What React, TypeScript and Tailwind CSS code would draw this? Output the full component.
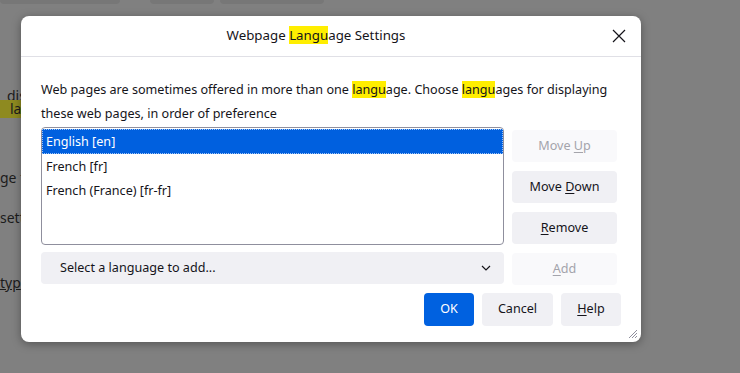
import React from 'react';

const Hl: React.FC<{ children: React.ReactNode }> = ({ children }) => (
    <span className="bg-[#ffee00]">{children}</span>
);

const SideButton: React.FC<{ pre?: string; key_: string; post: string; disabled?: boolean }> = ({ pre = '', key_, post, disabled }) => (
    <button
        className={
            disabled
                ? 'h-[32px] w-[105px] rounded-[4px] bg-[#f9f9fb] text-[#a4a4ab] text-[12.6px]'
                : 'h-[32px] w-[105px] rounded-[4px] bg-[#f0f0f4] text-[#15141a] text-[12.6px]'
        }
    >
        {pre}<span className="underline underline-offset-2">{key_}</span>{post}
    </button>
);

const languages = ['English [en]', 'French [fr]', 'French (France) [fr-fr]'];

export default function App() {
    return (
        <div className="relative w-[740px] h-[373px] overflow-hidden bg-[#808080] font-['Noto_Sans',sans-serif] text-[#15141a]">
            {/* dimmed page behind the dialog */}
            <div className="flex h-[5px]">
                <div className="w-[120px] h-[4px] rounded-b-[4px] bg-[#777777]" />
                <div className="flex gap-[6px] ml-[30px]">
                    <div className="w-[64px] h-[4px] rounded-b-[4px] bg-[#777777]" />
                    <div className="w-[104px] h-[4px] rounded-b-[4px] bg-[#777777]" />
                </div>
            </div>
            <div className="flex flex-col text-[14px] text-[#1c1c1c] leading-[20px]">
                <span className="mt-[81px] ml-[7px]">dis</span>
                <span className="-mt-[6px] w-[24px] h-[18px] pl-[10px] bg-[#8e8a20] leading-[18px]">la</span>
                <span className="mt-[50px]">ge f</span>
                <span className="mt-[20px]">sett</span>
                <span className="mt-[45px] underline">typ</span>
            </div>

            {/* dialog */}
            <div className="absolute left-[21px] top-[16px] w-[620px] h-[326px] bg-white rounded-[8px] shadow-[0_2px_10px_rgba(0,0,0,0.35)] flex flex-col">
                <div className="h-[41px] flex items-center border-b border-[#e0e0e6]">
                    <div className="flex-1 text-center text-[13.3px] pl-[6px]">
                        Webpage <Hl>Langu</Hl>age Settings
                    </div>
                    <button className="w-[28px] h-[28px] mr-[8px] flex items-center justify-center">
                        <svg width="14" height="14" viewBox="0 0 14 14">
                            <path d="M1 1L13 13M13 1L1 13" stroke="#15141a" strokeWidth="1.2" />
                        </svg>
                    </button>
                </div>

                <div className="px-[20px] pt-[21px] text-[12.6px]">
                    <p className="leading-[24px]">
                        Web pages are sometimes offered in more than one <Hl>langu</Hl>age. Choose <Hl>langu</Hl>ages for displaying these web pages, in order of preference
                    </p>
                    <div className="flex gap-[8px] mt-[1px]">
                        <div className="flex flex-col gap-[7px]">
                            <div className="w-[463px] h-[118px] border border-[#8f8f9d] rounded-[4px] flex flex-col pt-[1px]">
                                {languages.map((l, i) => (
                                    <div
                                        key={l}
                                        className={
                                            i === 0
                                                ? 'h-[25px] leading-[25px] px-[4px] bg-[#0060df] text-white outline-dotted outline-1 outline-[#9ec3f5] -outline-offset-1'
                                                : 'h-[24px] leading-[26px] px-[4px]'
                                        }
                                    >
                                        {l}
                                    </div>
                                ))}
                            </div>
                            <div className="w-[463px] h-[32px] rounded-[4px] bg-[#f0f0f4] flex items-center justify-between pl-[19px] pr-[13px]">
                                <span>Select a language to add...</span>
                                <svg width="10" height="6" viewBox="0 0 10 6">
                                    <path d="M1 1l4 4 4-4" fill="none" stroke="#15141a" strokeWidth="1.2" />
                                </svg>
                            </div>
                        </div>
                        <div className="flex flex-col gap-[9px] pt-[3px]">
                            <SideButton pre="Move " key_="U" post="p" disabled />
                            <SideButton pre="Move " key_="D" post="own" />
                            <SideButton key_="R" post="emove" />
                            <SideButton key_="A" post="dd" disabled />
                        </div>
                    </div>
                </div>

                <div className="flex justify-end gap-[8px] pr-[20px] mt-[8px] text-[12.6px]">
                    <button className="h-[33px] w-[50px] rounded-[4px] bg-[#0061e0] text-white">OK</button>
                    <button className="h-[33px] w-[71px] rounded-[4px] bg-[#f0f0f4]">Cancel</button>
                    <button className="h-[33px] w-[60px] rounded-[4px] bg-[#f0f0f4]">
                        <span className="underline underline-offset-2">H</span>elp
                    </button>
                </div>

                <svg className="absolute right-[3px] bottom-[3px]" width="12" height="12" viewBox="0 0 12 12">
                    <path d="M11 3L3 11M11 6L6 11M11 9L9 11" stroke="#8f8f9d" strokeWidth="1" />
                </svg>
            </div>
        </div>
    );
}
